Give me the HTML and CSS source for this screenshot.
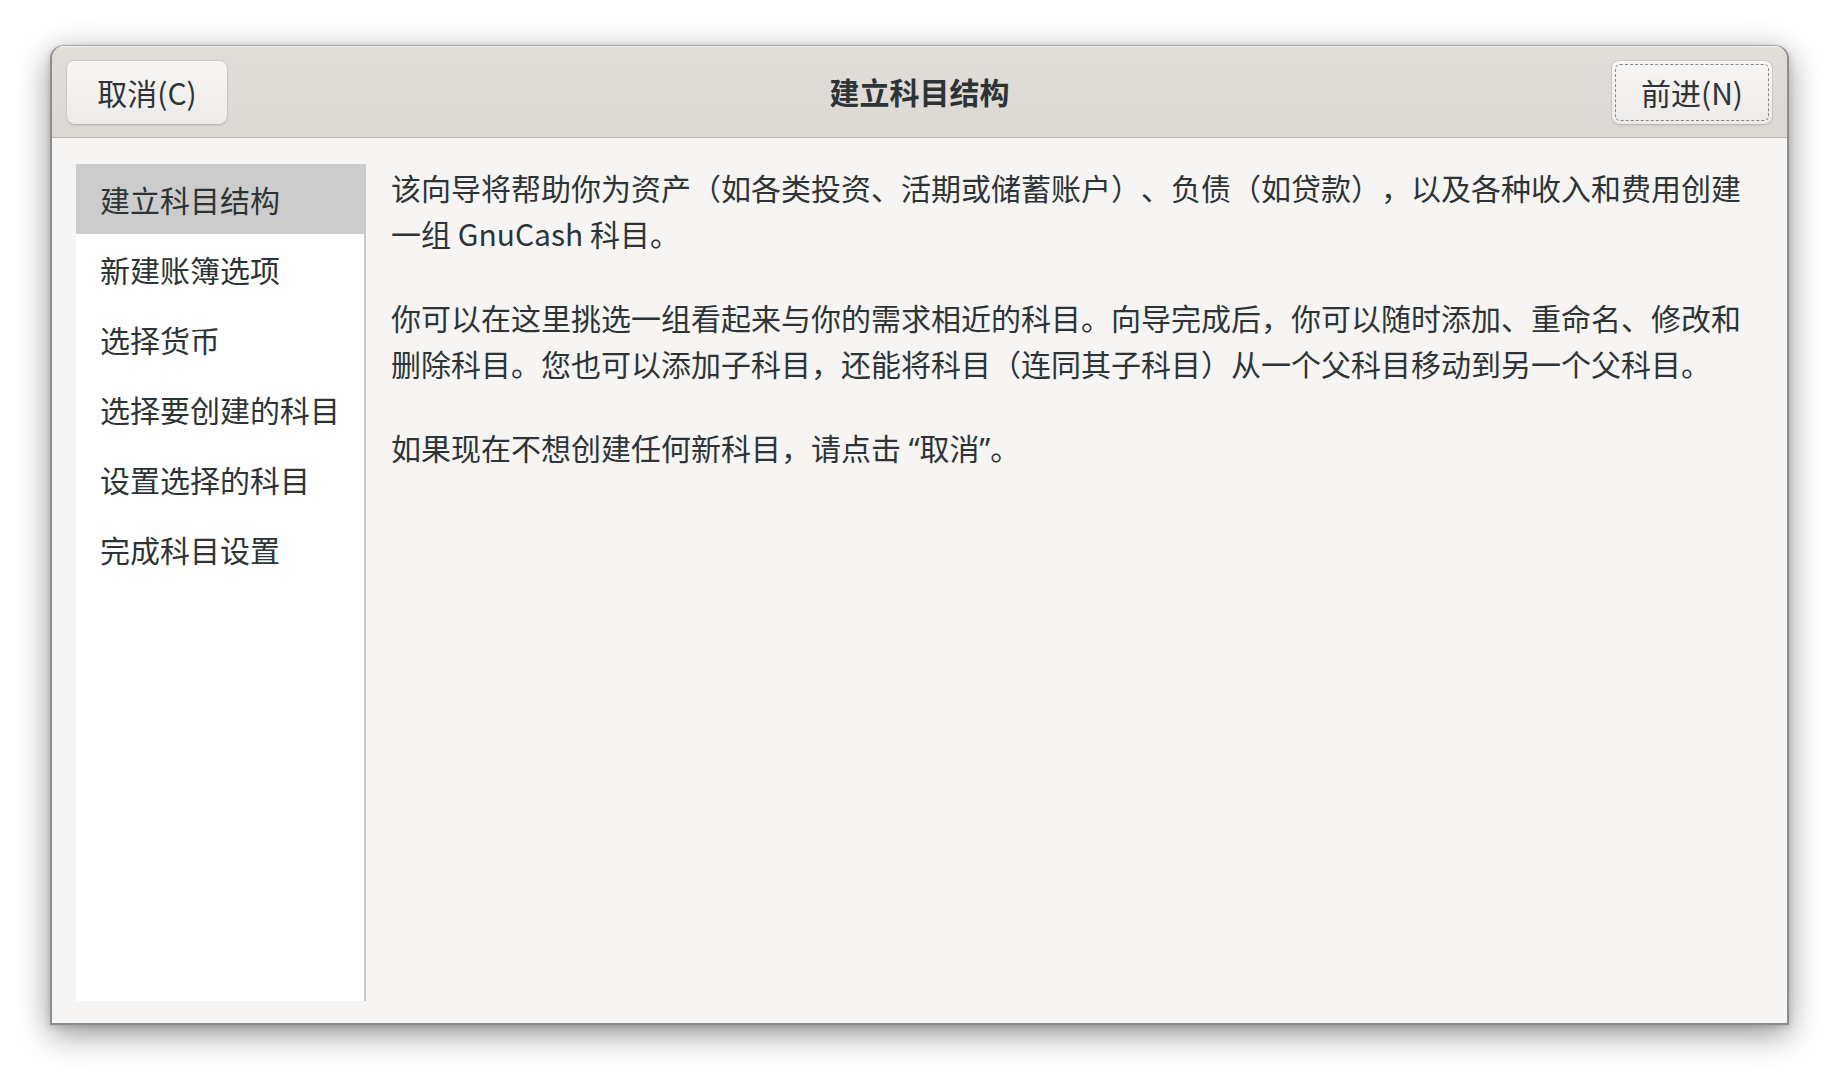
FILE: index.html
```html
<!DOCTYPE html>
<html lang="zh-CN">
<head>
<meta charset="utf-8">
<title>建立科目结构</title>
<link rel="stylesheet" href="styles.css">
</head>
<body>
<div class="window">
  <header class="headerbar">
    <button class="btn">取消(C)</button>
    <div class="title">建立科目结构</div>
    <button class="btn btn-focus">前进(N)</button>
  </header>
  <div class="main">
    <nav class="sidebar">
      <div class="item selected">建立科目结构</div>
      <div class="item">新建账簿选项</div>
      <div class="item">选择货币</div>
      <div class="item">选择要创建的科目</div>
      <div class="item">设置选择的科目</div>
      <div class="item">完成科目设置</div>
    </nav>
    <section class="content">
      <p>该向导将帮助你为资产（如各类投资、活期或储蓄账户）、负债（如贷款），以及各种收入和费用创建一组 GnuCash 科目。</p>
      <p>你可以在这里挑选一组看起来与你的需求相近的科目。向导完成后，你可以随时添加、重命名、修改和删除科目。您也可以添加子科目，还能将科目（连同其子科目）从一个父科目移动到另一个父科目。</p>
      <p>如果现在不想创建任何新科目，请点击<span class="latin"> “</span>取消<span class="latin">”</span>。</p>
    </section>
  </div>
</div>
</body>
</html>
```
FILE: styles.css
```css
html, body {
  margin: 0;
  padding: 0;
  background: #ffffff;
}

body {
  box-sizing: border-box;
  min-height: 1082px;
  padding: 45px 0 0 50px;
  font-family: "Noto Sans CJK SC", "Noto Sans", sans-serif;
  font-size: 30px;
  color: #2e3436;
  text-spacing-trim: space-all;
}

.window {
  width: 1739px;
  height: 980px;
  box-sizing: border-box;
  display: flex;
  flex-direction: column;
  border: 2px solid #8d8d8d;
  border-top: 1px solid #a9a7a5;
  border-radius: 14px 14px 0 0;
  background: #f6f5f4;
  box-shadow: 0 9px 32px rgba(0, 0, 0, 0.42), 0 2px 6px rgba(0, 0, 0, 0.15);
  overflow: hidden;
}

.headerbar {
  height: 92px;
  flex: none;
  box-sizing: border-box;
  display: flex;
  align-items: center;
  justify-content: space-between;
  padding: 0 14px;
  background: linear-gradient(#e1deda, #dcd8d4);
  border-bottom: 1px solid #bfb9b3;
  box-shadow: inset 0 1px 0 rgba(255, 255, 255, 0.6);
}

.title {
  font-weight: bold;
  font-size: 30px;
  color: #2e3436;
  margin-top: -1px;
}

.btn {
  width: 162px;
  height: 65px;
  box-sizing: border-box;
  font-family: inherit;
  font-size: 30px;
  color: #2e3436;
  background: linear-gradient(#f7f6f5, #edebe9);
  border: 1px solid #cdc7c2;
  border-bottom-color: #bfb8b1;
  border-radius: 9px;
  box-shadow: inset 0 1px 0 #ffffff, 0 1px 2px rgba(0, 0, 0, 0.07);
  padding: 0 0 2px 0;
  margin-top: 2px;
}

.btn-focus {
  outline: 1px dashed rgba(46, 52, 54, 0.55);
  outline-offset: -5px;
}

.main {
  flex: 1;
  display: flex;
  padding: 26px 0 22px 24px;
  min-height: 0;
}

.sidebar {
  width: 288px;
  flex: none;
  background: #ffffff;
  border-right: 2px solid #cfcac5;
}

.item {
  height: 70px;
  line-height: 70px;
  padding-left: 24px;
  white-space: nowrap;
}

.item.selected {
  background: #cccccc;
}

.content {
  flex: 1;
  padding: 0 20px 0 25px;
}

.content p {
  margin: 0 0 38px 0;
  line-height: 46px;
  max-width: 1365px;
}

.latin {
  font-family: "Noto Sans", sans-serif;
}
```
